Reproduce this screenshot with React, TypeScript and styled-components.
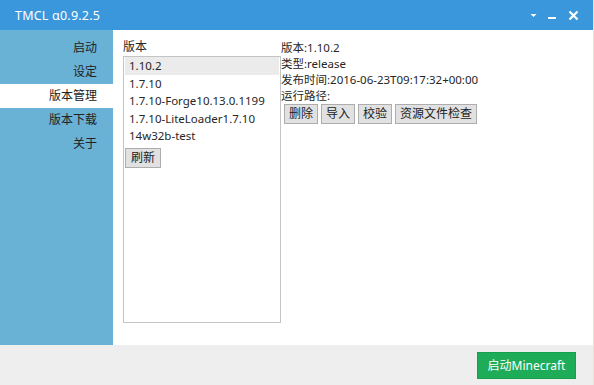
import React from "react";
import styled, { createGlobalStyle } from "styled-components";

const Global = createGlobalStyle`
  html, body { margin: 0; padding: 0; background: #fff; }
  body {
    font-family: "Noto Sans", "Noto Sans CJK SC", sans-serif;
    font-size: 12px;
    color: #262626;
  }
`;

const Window = styled.div`
  width: 594px;
  height: 385px;
  display: flex;
  flex-direction: column;
  box-sizing: border-box;
  border-right: 1px solid #e9e2d6;
  overflow: hidden;
`;

const TitleBar = styled.div`
  height: 30px;
  flex: none;
  background: #3b97dc;
  display: flex;
  align-items: center;
  padding: 0 14px 0 15px;
  color: #fff;
`;

const Title = styled.div`
  flex: 1;
  font-size: 12.5px;
  letter-spacing: 0.2px;
`;

const Controls = styled.div`
  display: flex;
  align-items: center;
  gap: 11px;
`;

const Ctrl = styled.svg`
  display: block;
`;

const Body = styled.div`
  flex: 1;
  display: flex;
  min-height: 0;
`;

const Sidebar = styled.div`
  width: 113px;
  flex: none;
  background: #6ab1d6;
  padding-top: 6px;
  box-sizing: border-box;
`;

const NavItem = styled.div<{ $active?: boolean }>`
  height: 24px;
  line-height: 24px;
  text-align: right;
  padding-right: 16px;
  background: ${(p) => (p.$active ? "#ffffff" : "transparent")};
  color: #222;
`;

const Main = styled.div`
  flex: 1;
  display: flex;
  padding: 9px 0 0 10px;
  background: #fff;
`;

const ListColumn = styled.div`
  width: 158px;
  flex: none;
  display: flex;
  flex-direction: column;
`;

const Label = styled.div`
  height: 16px;
  line-height: 16px;
  margin-bottom: 1px;
`;

const ListBox = styled.div`
  height: 267px;
  box-sizing: border-box;
  border: 1px solid #c4c4c4;
  padding: 0 1px;
`;

const ListItem = styled.div<{ $selected?: boolean }>`
  height: 17.5px;
  line-height: 17.5px;
  padding-left: 4px;
  font-size: 11.5px;
  background: ${(p) => (p.$selected ? "#ebebeb" : "transparent")};
  white-space: nowrap;
`;

const Button = styled.button`
  height: 20px;
  padding: 0 4px;
  box-sizing: border-box;
  border: 1px solid #adadad;
  background: #e1e1e1;
  font-family: inherit;
  font-size: 12px;
  color: #222;
  line-height: 18px;
  cursor: default;
`;

const RefreshButton = styled(Button)`
  margin-top: 3px;
  align-self: flex-start;
  width: 36px;
`;

const ListInner = styled.div`
  display: flex;
  flex-direction: column;
`;

const Details = styled.div`
  padding-top: 1px;
  display: flex;
  flex-direction: column;
`;

const InfoLine = styled.div`
  height: 16px;
  line-height: 16px;
  font-size: 11.5px;
  white-space: nowrap;
`;

const ButtonRow = styled.div`
  display: flex;
  gap: 3px;
  margin-left: 3px;
`;

const Footer = styled.div`
  height: 40px;
  flex: none;
  background: #eeeeee;
  display: flex;
  align-items: center;
  justify-content: flex-end;
  padding-right: 17px;
`;

const LaunchButton = styled.button`
  width: 99px;
  height: 27px;
  border: 1px solid #16a04e;
  background: #1eac58;
  color: #fff;
  font-family: inherit;
  font-size: 12px;
  cursor: default;
`;

const versions = [
  "1.10.2",
  "1.7.10",
  "1.7.10-Forge10.13.0.1199",
  "1.7.10-LiteLoader1.7.10",
  "14w32b-test",
];

const nav = ["启动", "设定", "版本管理", "版本下载", "关于"];

export default function App() {
  return (
    <>
      <Global />
      <Window>
        <TitleBar>
          <Title>TMCL α0.9.2.5</Title>
          <Controls>
            <Ctrl width="7" height="8" viewBox="0 0 7 8">
              <path d="M0.5 3 L6.5 3 L3.5 6 Z" fill="#fff" />
            </Ctrl>
            <Ctrl width="8" height="10" viewBox="0 0 8 10">
              <rect x="0" y="7" width="8" height="2" fill="#fff" />
            </Ctrl>
            <Ctrl width="11" height="11" viewBox="0 0 11 11" style={{ marginLeft: 1 }}>
              <path d="M1.5 1.5 L9.5 9.5 M9.5 1.5 L1.5 9.5" stroke="#fff" strokeWidth="2.2" />
            </Ctrl>
          </Controls>
        </TitleBar>
        <Body>
          <Sidebar>
            {nav.map((n, i) => (
              <NavItem key={n} $active={i === 2}>
                {n}
              </NavItem>
            ))}
          </Sidebar>
          <Main>
            <ListColumn>
              <Label>版本</Label>
              <ListBox>
                <ListInner>
                  {versions.map((v, i) => (
                    <ListItem key={v} $selected={i === 0}>
                      {v}
                    </ListItem>
                  ))}
                  <RefreshButton>刷新</RefreshButton>
                </ListInner>
              </ListBox>
            </ListColumn>
            <Details>
              <InfoLine>版本:1.10.2</InfoLine>
              <InfoLine>类型:release</InfoLine>
              <InfoLine>发布时间:2016-06-23T09:17:32+00:00</InfoLine>
              <InfoLine>运行路径:</InfoLine>
              <ButtonRow>
                <Button>删除</Button>
                <Button>导入</Button>
                <Button>校验</Button>
                <Button>资源文件检查</Button>
              </ButtonRow>
            </Details>
          </Main>
        </Body>
        <Footer>
          <LaunchButton>启动Minecraft</LaunchButton>
        </Footer>
      </Window>
    </>
  );
}
